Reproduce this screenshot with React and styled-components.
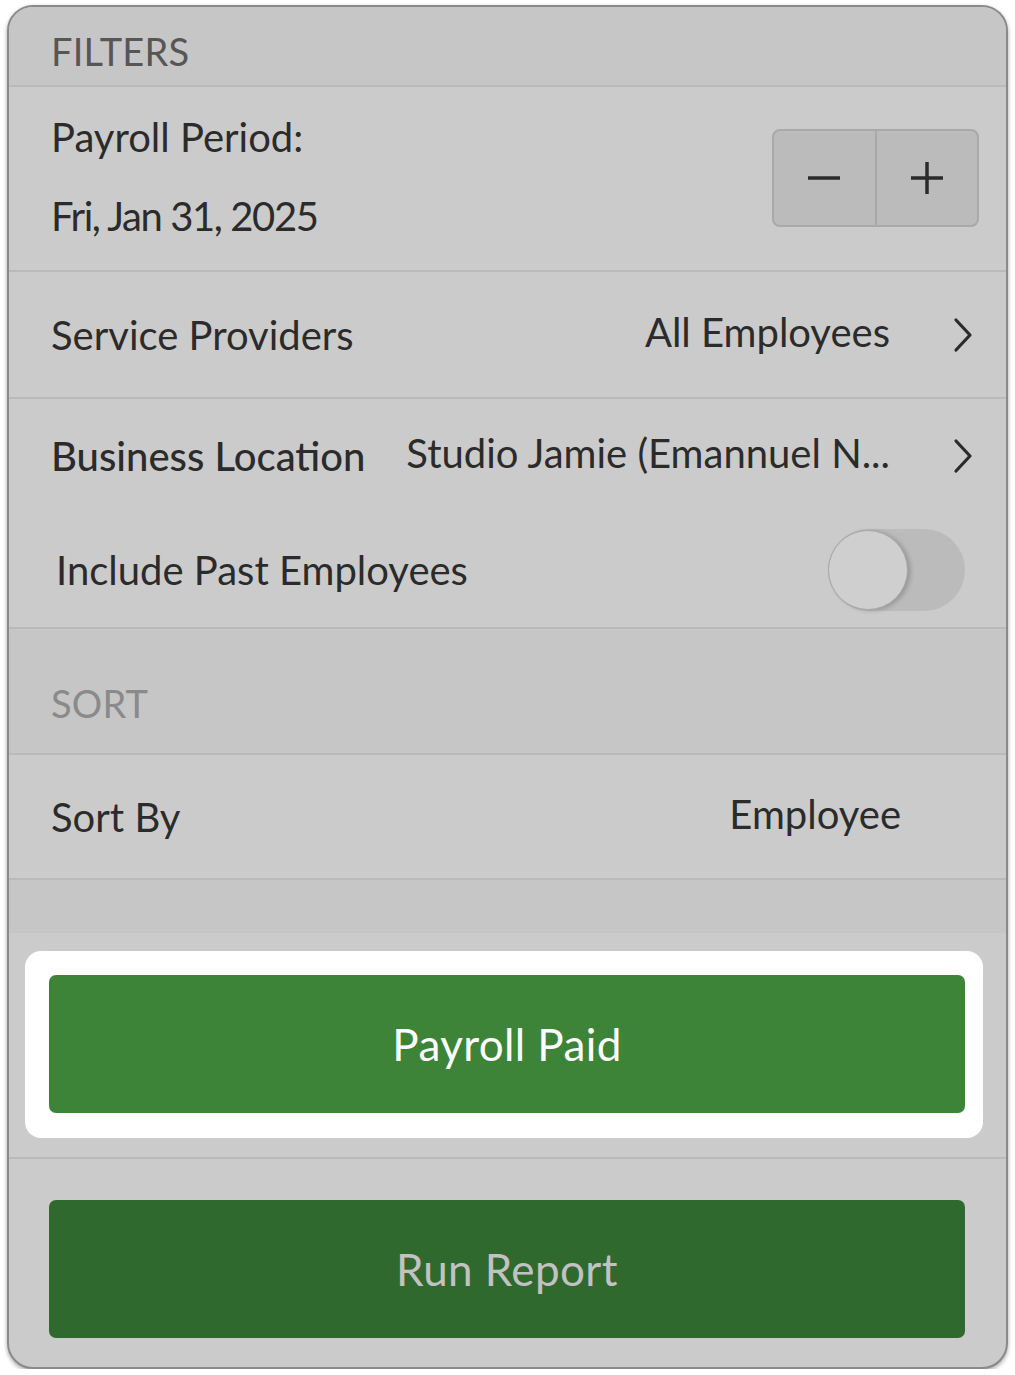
import React from "react";
import styled, { createGlobalStyle } from "styled-components";

const GlobalStyle = createGlobalStyle`
  body {
    margin: 0;
    background: #ffffff;
    font-family: "Lato", "Noto Sans", sans-serif;
    color: #2b2b2b;
  }
`;

const Frame = styled.div`
  box-sizing: border-box;
  width: 1001px;
  height: 1364px;
  margin: 5px 0 0 7px;
  border-radius: 26px;
  overflow: hidden;
  background: #cbcbcb;
  border: 2px solid #8a8a8a;
  box-shadow: 0 2px 4px rgba(0, 0, 0, 0.35);
  display: flex;
  flex-direction: column;
`;

const SectionHeader = styled.div`
  box-sizing: border-box;
  flex: none;
  height: ${(p) => p.$height}px;
  display: flex;
  align-items: center;
  padding: ${(p) => p.$top || 0}px 0 0 42px;
  background: #c6c6c6;
  border-bottom: 2px solid #bababa;
  font-size: 38px;
  line-height: 1;
  letter-spacing: 0.2px;
  color: ${(p) => (p.$muted ? "#8a8a8a" : "#565656")};
`;

const Row = styled.div`
  box-sizing: border-box;
  flex: none;
  height: ${(p) => p.$height}px;
  display: flex;
  align-items: center;
  padding: 0 ${(p) => p.$right || 32}px 0 ${(p) => p.$left || 42}px;
  border-bottom: ${(p) => (p.$noLine ? "none" : "2px solid #bababa")};
  font-size: 40px;
  line-height: 48px;
`;

const PeriodText = styled.div`
  flex: 1;
  display: flex;
  flex-direction: column;
  gap: 31px;
  margin-top: -4px;
`;

const DateLine = styled.span`
  letter-spacing: -1.4px;
`;

const Label = styled.span`
  flex: 1;
  font-weight: ${(p) => (p.$strong ? 500 : 400)};
  color: #2b2b2b;
  white-space: nowrap;
`;

const Value = styled.span`
  color: #2b2b2b;
  white-space: nowrap;
  margin-top: -6px;
`;

const Chevron = styled.svg`
  width: 22px;
  height: 36px;
  margin-left: 62px;
  flex: none;
`;

const Stepper = styled.div`
  display: flex;
  width: 207px;
  height: 98px;
  box-sizing: border-box;
  border: 2px solid #a9a9a9;
  border-radius: 8px;
  background: #bbbbbb;
  overflow: hidden;
  margin-top: -2px;
  margin-right: -5px;
`;

const StepButton = styled.div`
  flex: 1;
  display: flex;
  align-items: center;
  justify-content: center;
  & + & {
    border-left: 2px solid #a9a9a9;
  }
`;

const Toggle = styled.div`
  position: relative;
  width: 137px;
  height: 82px;
  border-radius: 41px;
  background: #bbbbbb;
  margin-right: 9px;
`;

const Knob = styled.div`
  position: absolute;
  left: 0;
  top: 1px;
  width: 78px;
  height: 78px;
  border-radius: 50%;
  background: #cfcfcf;
  border: 1px solid #a8a8a8;
  box-shadow: 3px 1px 4px rgba(0, 0, 0, 0.18);
`;

const Spacer = styled.div`
  flex: none;
  height: 53px;
  background: #c6c6c6;
`;

const ButtonArea = styled.div`
  box-sizing: border-box;
  flex: none;
  height: ${(p) => p.$height}px;
  padding: ${(p) => p.$pad};
  border-bottom: ${(p) => (p.$line ? "2px solid #bababa" : "none")};
`;

const Highlight = styled.div`
  background: #ffffff;
  border-radius: 16px;
  padding: 24px 18px 25px 24px;
`;

const ActionButton = styled.div`
  height: 138px;
  border-radius: 7px;
  display: flex;
  align-items: center;
  justify-content: center;
  font-size: 44px;
  letter-spacing: 0.4px;
  background: ${(p) => (p.$dark ? "#30692e" : "#3d8439")};
  color: ${(p) => (p.$dark ? "#c2c2c2" : "#ffffff")};
`;

function ChevronIcon() {
  return (
    <Chevron viewBox="0 0 22 36">
      <path
        d="M4 3 L18 18 L4 33"
        fill="none"
        stroke="#2b2b2b"
        strokeWidth="3.2"
        strokeLinecap="round"
        strokeLinejoin="round"
      />
    </Chevron>
  );
}

function MinusIcon() {
  return (
    <svg width="34" height="34" viewBox="0 0 34 34">
      <path d="M1 17 H33" stroke="#2b2b2b" strokeWidth="3.5" />
    </svg>
  );
}

function PlusIcon() {
  return (
    <svg width="34" height="34" viewBox="0 0 34 34">
      <path d="M1 17 H33 M17 1 V33" stroke="#2b2b2b" strokeWidth="3.5" />
    </svg>
  );
}

export default function App() {
  return (
    <>
      <GlobalStyle />
      <Frame>
        <SectionHeader $height={80} $top={10}>
          FILTERS
        </SectionHeader>

        <Row $height={185}>
          <PeriodText>
            <span>Payroll Period:</span>
            <DateLine>Fri, Jan 31, 2025</DateLine>
          </PeriodText>
          <Stepper>
            <StepButton>
              <MinusIcon />
            </StepButton>
            <StepButton>
              <PlusIcon />
            </StepButton>
          </Stepper>
        </Row>

        <Row $height={127}>
          <Label>Service Providers</Label>
          <Value>All Employees</Value>
          <ChevronIcon />
        </Row>

        <Row $height={114} $noLine>
          <Label $strong>Business Location</Label>
          <Value>Studio Jamie (Emannuel N...</Value>
          <ChevronIcon />
        </Row>

        <Row $height={116} $left={47}>
          <Label>Include Past Employees</Label>
          <Toggle>
            <Knob />
          </Toggle>
        </Row>

        <SectionHeader $height={126} $top={24} $muted>
          SORT
        </SectionHeader>

        <Row $height={125} $right={105}>
          <Label>Sort By</Label>
          <Value>Employee</Value>
        </Row>

        <Spacer />

        <ButtonArea $height={226} $pad="18px 23px 0 16px" $line>
          <Highlight>
            <ActionButton>Payroll Paid</ActionButton>
          </Highlight>
        </ButtonArea>

        <ButtonArea $height={200} $pad="41px 41px 0 40px">
          <ActionButton $dark>Run Report</ActionButton>
        </ButtonArea>
      </Frame>
    </>
  );
}
